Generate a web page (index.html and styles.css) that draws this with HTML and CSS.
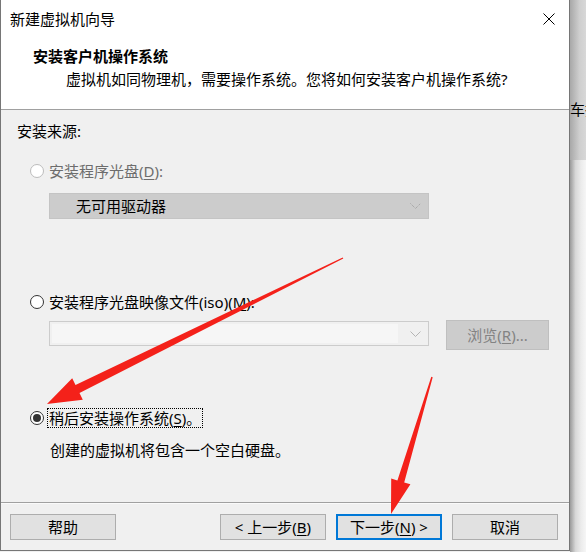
FILE: index.html
```html
<!DOCTYPE html>
<html lang="zh-CN">
<head>
<meta charset="utf-8">
<title>新建虚拟机向导</title>
<link rel="stylesheet" href="styles.css">
</head>
<body>
<div class="page">
  <div class="dialog">
    <div class="header">
      <div class="titlebar">
        <span class="title">新建虚拟机向导</span>
        <svg class="close" width="12" height="12" viewBox="0 0 12 12"><path d="M0.5 0.5L11.5 11.5M11.5 0.5L0.5 11.5" stroke="#000" stroke-width="1" fill="none"/></svg>
      </div>
      <div class="heading">安装客户机操作系统</div>
      <div class="subtitle">虚拟机如同物理机，需要操作系统。您将如何安装客户机操作系统?</div>
    </div>
    <div class="body">
      <div class="source-label">安装来源:</div>
      <div class="option option-first disabled">
        <span class="radio radio-disabled"></span>
        <span class="label">安装程序光盘(<u>D</u>):</span>
      </div>
      <div class="combo combo-disabled">
        <span class="combo-text">无可用驱动器</span>
        <svg class="chev" width="11" height="6" viewBox="0 0 11 6"><path d="M0.5 0.5L5.5 5.5L10.5 0.5" stroke="#9a9a9a" stroke-width="1" fill="none" stroke-dasharray="1 1"/></svg>
      </div>
      <div class="option option-iso">
        <span class="radio"></span>
        <span class="label">安装程序光盘映像文件(iso)(<u>M</u>):</span>
      </div>
      <div class="iso-row">
        <div class="combo combo-edit">
          <span class="edit-area"></span>
          <svg class="chev" width="11" height="6" viewBox="0 0 11 6"><path d="M0.5 0.5L5.5 5.5L10.5 0.5" stroke="#b4b4b4" stroke-width="1" fill="none"/></svg>
        </div>
        <div class="browse">浏览(<u>R</u>)...</div>
      </div>
      <div class="option option-later">
        <span class="radio radio-checked"><span class="dot"></span></span>
        <span class="label focus">稍后安装操作系统(<u>S</u>)。</span>
      </div>
      <div class="note">创建的虚拟机将包含一个空白硬盘。</div>
    </div>
    <div class="footer">
      <button class="btn btn-help">帮助</button>
      <button class="btn">&lt; 上一步(<u>B</u>)</button>
      <button class="btn btn-default">下一步(<u>N</u>) &gt;</button>
      <button class="btn">取消</button>
    </div>
  </div>
  <div class="side">
    <div class="side-top"><span class="side-text">车接</span></div>
    <div class="side-bottom"></div>
  </div>
</div>
<svg class="arrows" width="586" height="552" viewBox="0 0 586 552">
  <polygon fill="#f4211a" points="343.3,258.6 79.5,393.0 82.8,399.8 47,404 72.2,378.2 75.5,385.0 342.7,257.4"/>
  <polygon fill="#f4211a" points="432.7,377.2 404.2,482.4 410.4,484.3 391,514 391.2,478.5 397.4,480.4 431.3,376.8"/>
</svg>
</body>
</html>
```

FILE: styles.css
```css
html, body {
  margin: 0;
  padding: 0;
}
body {
  width: 586px;
  height: 552px;
  overflow: hidden;
  position: relative;
  font-family: "Noto Sans", "Noto Sans CJK SC", sans-serif;
  font-size: 15px;
  color: #000;
  background: #f0f0f0;
}
u {
  text-decoration: underline;
  text-underline-offset: 2px;
}
.page {
  display: flex;
  height: 552px;
}
.dialog {
  width: 570px;
  height: 551px;
  box-sizing: border-box;
  border: 1px solid #767676;
  border-top: none;
  display: flex;
  flex-direction: column;
  background: #f0f0f0;
}
.header {
  background: #fff;
  height: 110px;
  box-sizing: border-box;
  border-bottom: 1px solid #a0a0a0;
}
.titlebar {
  display: flex;
  align-items: center;
  justify-content: space-between;
  padding: 9px 14px 0 9px;
  height: 20px;
}
.title {
  line-height: 20px;
}
.close {
  display: block;
}
.heading {
  margin: 17px 0 0 32px;
  line-height: 20px;
  font-weight: bold;
}
.subtitle {
  margin: 3px 0 0 65px;
  line-height: 20px;
}
.body {
  flex: 1;
  padding: 11px 0 0 16px;
  box-sizing: border-box;
}
.source-label {
  line-height: 20px;
}
.option {
  display: flex;
  align-items: center;
  height: 20px;
  margin-left: 13px;
}
.option-first {
  margin-top: 20px;
}
.option-iso {
  margin-top: 73px;
}
.option-later {
  margin-top: 58px;
}
.disabled .label {
  color: #6d6d6d;
}
.label {
  line-height: 20px;
  white-space: nowrap;
}
.radio {
  width: 14px;
  height: 14px;
  box-sizing: border-box;
  border: 1px solid #333;
  border-radius: 50%;
  background: #fff;
  margin-right: 5px;
  flex: none;
  display: flex;
  align-items: center;
  justify-content: center;
}
.radio-disabled {
  border-color: #bcbcbc;
}
.dot {
  width: 8px;
  height: 8px;
  border-radius: 50%;
  background: #333;
}
.label.focus {
  border: 1px dotted #000;
  line-height: 18px;
  padding: 0 1px;
  margin-left: -2px;
}
.combo {
  width: 380px;
  box-sizing: border-box;
  display: flex;
  align-items: center;
  position: relative;
}
.combo-disabled {
  margin: 12px 0 0 32px;
  height: 26px;
  background: #cccccc;
  border: 1px solid #c4c4c4;
}
.combo-text {
  flex: 1;
  padding-left: 26px;
  line-height: 20px;
  color: #000;
}
.chev {
  display: block;
  margin-right: 7px;
  flex: none;
}
.iso-row {
  display: flex;
  align-items: flex-start;
  margin: 8px 0 0 32px;
}
.combo-edit {
  margin-top: 1px;
  height: 25px;
  background: #f0f0f0;
  border: 1px solid #cccccc;
  padding: 2px 0 2px 2px;
}
.edit-area {
  flex: 1;
  align-self: stretch;
  background: #f6f6f6;
  margin-right: 12px;
}
.browse {
  margin-left: 17px;
  width: 103px;
  height: 30px;
  box-sizing: border-box;
  background: #cccccc;
  border: 1px solid #bfbfbf;
  color: #838383;
  display: flex;
  align-items: center;
  justify-content: center;
  line-height: 20px;
}
.note {
  margin: 12px 0 0 33px;
  line-height: 20px;
}
.footer {
  height: 48px;
  box-sizing: border-box;
  border-top: 1px solid #a0a0a0;
  box-shadow: inset 0 1px 0 #fafafa;
  display: flex;
  gap: 10px;
  padding: 11px 11px 0 9px;
}
.btn {
  width: 106px;
  height: 26px;
  box-sizing: border-box;
  background: #e1e1e1;
  border: 1px solid #adadad;
  font-family: inherit;
  font-size: 15px;
  color: #000;
  line-height: 20px;
  padding: 0;
  margin: 0;
  display: flex;
  align-items: center;
  justify-content: center;
}
.btn-help {
  margin-right: auto;
}
.btn-default {
  border: 2px solid #0078d7;
}
.side {
  width: 16px;
  display: flex;
  flex-direction: column;
  overflow: hidden;
}
.side-top {
  height: 160px;
  background: linear-gradient(to right, #a8a8a8, #cfcfcf 60%, #d8d8d8);
  padding-top: 99px;
  box-sizing: border-box;
  white-space: nowrap;
}
.side-text {
  line-height: 20px;
  display: block;
}
.side-bottom {
  flex: 1;
  background: linear-gradient(to right, #9a9a9a, #d8d8d8 35%, #ececec 70%, #f6f6f6);
}
.arrows {
  position: absolute;
  left: 0;
  top: 0;
  pointer-events: none;
}
```
